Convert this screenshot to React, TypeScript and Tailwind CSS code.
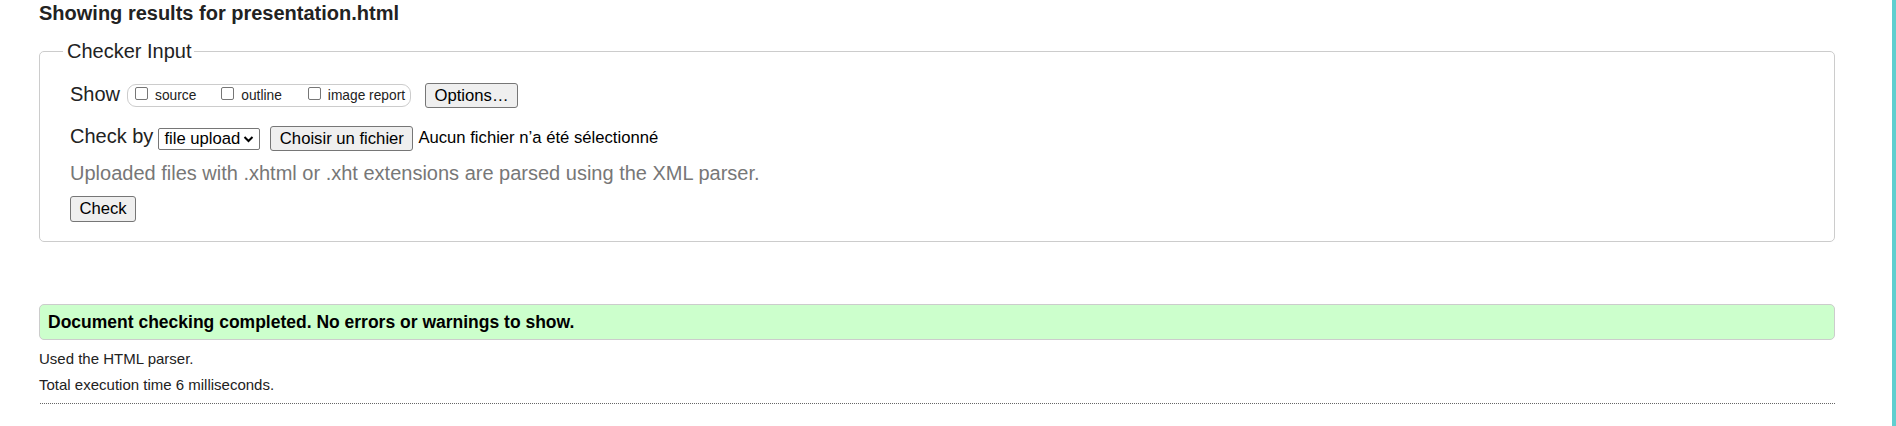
import React from "react";

function Checkbox() {
  return (
    <span className="inline-block w-[13px] h-[13px] border border-[#767676] rounded-[2px] bg-white shrink-0 mb-[5px]" />
  );
}

function Btn({ children, className }: { children: React.ReactNode; className: string }) {
  return (
    <span
      className={
        "inline-flex items-center justify-center bg-[#efefef] border border-[#767676] rounded-[3px] text-[16.67px] leading-[20px] text-black shrink-0 " +
        className
      }
    >
      {children}
    </span>
  );
}

export default function App() {
  return (
    <div className="w-[1896px] h-[426px] flex bg-white font-['Liberation_Sans',Arial,sans-serif] text-[#222] overflow-hidden">
      <div className="flex-1 pl-[39px]">
        <div className="w-[1796px]">
          <h2 className="text-[20px] leading-[24px] font-bold mt-[1px]">
            Showing results for presentation.html
          </h2>

          <fieldset className="mt-[14px] border border-[#cccccc] rounded-[5px] px-[23px] pb-[19px]">
            <legend className="text-[20px] leading-[24px] pl-[4px] pr-[2px]">Checker Input</legend>
            <div className="pl-[7px]">
              <div className="flex items-center h-[25px] mt-[20px]">
                <span className="text-[20px] leading-[24px] mb-[3px]">Show</span>
                <div className="ml-[7px] h-[23px] w-[284px] flex items-center border border-[#cccccc] rounded-[9px] pl-[7px]">
                  <Checkbox />
                  <span className="ml-[7px] text-[13.75px] leading-[16px]">source</span>
                  <span className="ml-[25px] flex items-center">
                    <Checkbox />
                  </span>
                  <span className="ml-[7px] text-[13.75px] leading-[16px]">outline</span>
                  <span className="ml-[26px] flex items-center">
                    <Checkbox />
                  </span>
                  <span className="ml-[7px] text-[13.75px] leading-[16px]">image report</span>
                </div>
                <Btn className="ml-[14px] w-[93px] h-[25px]">Options…</Btn>
              </div>

              <div className="flex items-center h-[25px] mt-[18px]">
                <span className="text-[20px] leading-[24px] mb-[5px]">Check by</span>
                <div className="ml-[5px] w-[102px] h-[22px] flex items-center justify-between border border-[#767676] rounded-[2px] pl-[5px] pr-[5px] text-[16.67px] leading-[20px] text-black">
                  <span>file upload</span>
                  <svg width="11" height="8" viewBox="0 0 11 8" className="mt-[1px]">
                    <path d="M1.5 2 L5.5 6 L9.5 2" fill="none" stroke="#000" strokeWidth="2" />
                  </svg>
                </div>
                <Btn className="ml-[10px] w-[143px] h-[25px]">Choisir un fichier</Btn>
                <span className="ml-[5px] text-[16.67px] leading-[20px] text-black mb-[1px]">
                  Aucun fichier n’a été sélectionné
                </span>
              </div>

              <p className="mt-[10px] text-[20px] leading-[24px] text-[#777777]">
                Uploaded files with .xhtml or .xht extensions are parsed using the XML parser.
              </p>

              <div className="mt-[11px] flex">
                <Btn className="w-[66px] h-[26px]">Check</Btn>
              </div>
            </div>
          </fieldset>

          <div className="mt-[62px] h-[36px] flex items-center bg-[#ccffcc] border border-[#cccccc] rounded-[5px] pl-[8px]">
            <span className="text-[17.5px] leading-[20px] font-bold text-black">
              Document checking completed. No errors or warnings to show.
            </span>
          </div>

          <p className="mt-[10px] text-[15px] leading-[18px] text-[#222]">Used the HTML parser.</p>
          <p className="mt-[7.5px] text-[15px] leading-[18px] text-[#222]">
            Total execution time 6 milliseconds.
          </p>
          <div className="mt-[9.5px] border-t border-dotted border-[#666666] ml-[1px]" />
        </div>
      </div>
      <div className="w-[4px] h-full bg-[#5fcfcf]" />
    </div>
  );
}
